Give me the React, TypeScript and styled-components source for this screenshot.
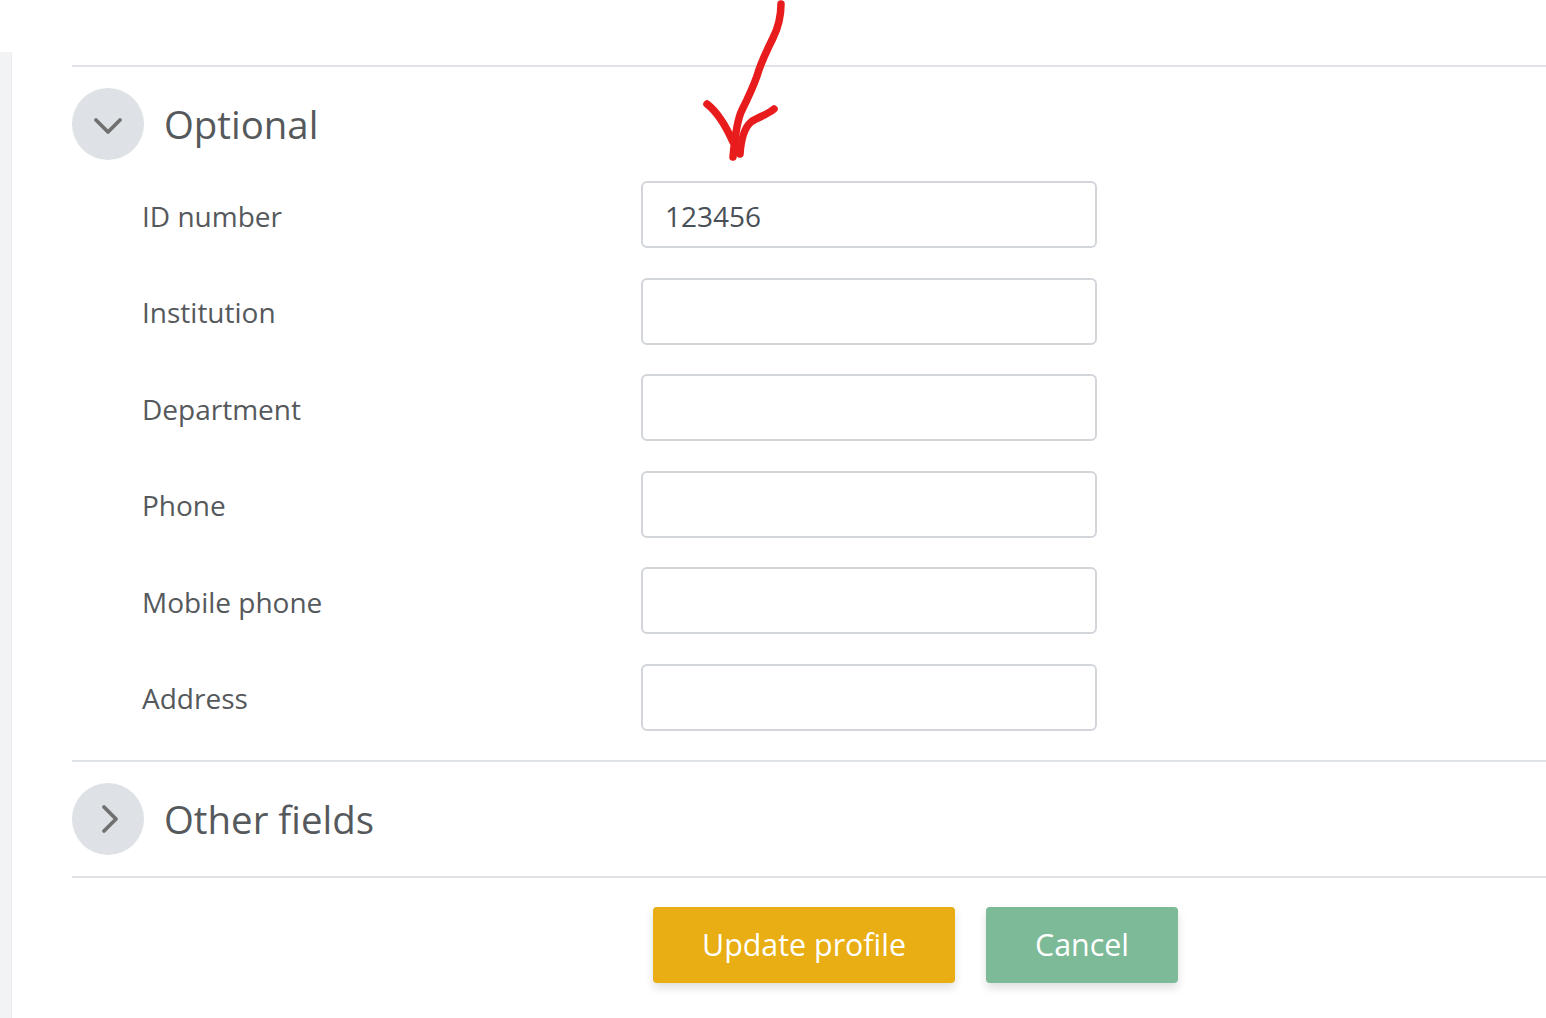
import React from 'react'
import styled, { createGlobalStyle } from 'styled-components'
import { ChevronDown, ChevronRight } from 'lucide-react'

const GlobalStyle = createGlobalStyle`
  html, body {
    margin: 0;
    padding: 0;
    background: #fff;
    overflow: hidden;
  }
  body {
    font-family: "Open Sans", "Noto Sans", sans-serif;
    color: #55595c;
  }
`

const Page = styled.div`
  position: relative;
  display: flex;
  width: 1546px;
  height: 1018px;
  overflow: hidden;
`

const SideStrip = styled.div`
  width: 11px;
  margin-top: 52px;
  background: #f1f3f5;
  border-right: 1px solid #e9ebee;
`

const Main = styled.main`
  flex: 1;
  padding: 65px 0 0 60px;
`

const Section = styled.section`
  border-top: 2px solid #dfe3e7;
  &:last-of-type {
    border-bottom: 2px solid #dfe3e7;
  }
`

const SectionHeader = styled.div`
  display: flex;
  align-items: center;
  gap: 20px;
  padding: 21px 0;
`

const Toggle = styled.span<{ $open?: boolean }>`
  display: flex;
  align-items: center;
  justify-content: center;
  width: 72px;
  height: 72px;
  border-radius: 50%;
  background: #dee1e6;
  color: #70716f;
  padding: ${p => (p.$open ? '3px 0 0' : '0 0 0 4px')};
  box-sizing: border-box;
`

const Title = styled.h3`
  margin: 0;
  font-size: 38.4px;
  line-height: 72px;
  font-weight: 400;
  color: #55595c;
`

const Fields = styled.div`
  display: flex;
  flex-direction: column;
  gap: 29.5px;
  padding-bottom: 29px;
`

const Row = styled.div`
  display: flex;
  align-items: center;
  height: 67px;
  padding-left: 70px;
`

const FieldLabel = styled.label`
  width: 499px;
  font-size: 28px;
  line-height: 40px;
  margin-top: 2px;
  color: #55595c;
`

const TextInput = styled.input`
  box-sizing: border-box;
  width: 456px;
  height: 67px;
  padding: 2px 22px 0;
  border: 2px solid #d2d5da;
  border-radius: 6px;
  background: #fff;
  font-family: inherit;
  font-size: 28px;
  color: #495057;
  outline: none;
`

const Actions = styled.div`
  display: flex;
  gap: 31px;
  padding: 29px 0 0 581px;
`

const Btn = styled.button<{ $bg: string; $w: number }>`
  width: ${p => p.$w}px;
  height: 76px;
  border: 0;
  border-radius: 4px;
  background: ${p => p.$bg};
  box-shadow: 0 5px 10px rgba(0, 0, 0, 0.13);
  color: #fff;
  font-family: inherit;
  font-size: 30.4px;
  padding: 0;
`

const Scribble = styled.svg`
  position: absolute;
  left: 695px;
  top: 0;
  pointer-events: none;
`

const fields = [
  { label: 'ID number', value: '123456' },
  { label: 'Institution', value: '' },
  { label: 'Department', value: '' },
  { label: 'Phone', value: '' },
  { label: 'Mobile phone', value: '' },
  { label: 'Address', value: '' },
]

export default function App() {
  return (
    <Page>
      <GlobalStyle />
      <SideStrip />
      <Main>
        <Section>
          <SectionHeader>
            <Toggle $open>
              <ChevronDown size={48} strokeWidth={1.9} />
            </Toggle>
            <Title>Optional</Title>
          </SectionHeader>
          <Fields>
            {fields.map(f => (
              <Row key={f.label}>
                <FieldLabel>{f.label}</FieldLabel>
                <TextInput defaultValue={f.value} />
              </Row>
            ))}
          </Fields>
        </Section>
        <Section>
          <SectionHeader>
            <Toggle>
              <ChevronRight size={48} strokeWidth={1.9} />
            </Toggle>
            <Title>Other fields</Title>
          </SectionHeader>
        </Section>
        <Actions>
          <Btn $bg="#e8ae13" $w={302}>Update profile</Btn>
          <Btn $bg="#7cba98" $w={192}>Cancel</Btn>
        </Actions>
      </Main>
      {/* hand-drawn arrow on top of the screenshot */}
      <Scribble width="90" height="165" viewBox="695 0 90 165" fill="none" stroke="#e81c1c" strokeWidth="7.5" strokeLinecap="round" strokeLinejoin="round">
        <path d="M781 4 C781 16 778 28 773 38 C766 52 761 62 757 76 C752 90 747 100 742 110 C737 120 735 135 733 157" />
        <path d="M707 104 C716 111 725 124 733 142" />
        <path d="M774 109 C767 115 758 117 751 122 C744 128 741 140 740 154" />
      </Scribble>
    </Page>
  )
}
